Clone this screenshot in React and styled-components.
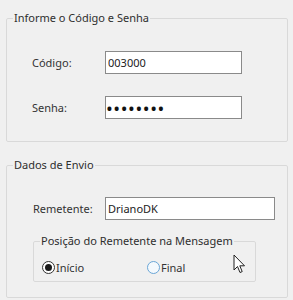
import React from "react";
import styled, { createGlobalStyle } from "styled-components";

const Global = createGlobalStyle`
  html, body {
    margin: 0;
    padding: 0;
    background: #f0f0f0;
  }
  body {
    font-family: "Noto Sans", "Open Sans", sans-serif;
    font-size: 11px;
    color: #2b2b2b;
  }
`;

const Page = styled.div`
  position: relative;
  width: 293px;
  height: 300px;
  padding: 11px 0 0 6px;
  box-sizing: border-box;
  overflow: hidden;
`;

const Group = styled.fieldset`
  margin: 0 0 ${(p) => p.$gap || 0}px 0;
  width: ${(p) => p.$width}px;
  height: ${(p) => p.$height}px;
  box-sizing: border-box;
  border: 1px solid #d9d9d9;
  border-radius: 2px;
  padding: 0;
  min-width: 0;
`;

const Title = styled.legend`
  padding: 0 1px;
  margin-left: ${(p) => p.$indent || 6}px;
  font-size: 11px;
  line-height: 14px;
  height: 14px;
  white-space: nowrap;
  color: #2e2e2e;
`;

const Body = styled.div`
  padding: ${(p) => p.$pad};
`;

const Row = styled.div`
  display: flex;
  align-items: center;
  height: 23px;
  margin-bottom: ${(p) => p.$gap || 0}px;
`;

const Label = styled.label`
  width: ${(p) => p.$width || 73}px;
  flex: none;
  font-size: 11px;
  color: #333;
`;

const Field = styled.input`
  box-sizing: border-box;
  width: ${(p) => p.$width}px;
  height: 23px;
  border: 1px solid #8a8a8a;
  background: #fff;
  padding: 0 2px;
  font-family: "Noto Sans", "Open Sans", sans-serif;
  font-size: 11px;
  color: #222;
  outline: none;
  border-radius: 0;
  &[type="password"] {
    font-size: 18px;
    letter-spacing: 0.6px;
    padding-left: 0;
    color: #111;
  }
`;

const Options = styled.div`
  display: flex;
  align-items: center;
  height: 22px;
  margin-top: 8px;
`;

const Option = styled.label`
  display: flex;
  align-items: center;
  width: ${(p) => p.$width}px;
  font-size: 11px;
  color: #333;
`;

const Dot = styled.span`
  width: 13px;
  height: 13px;
  box-sizing: border-box;
  border-radius: 50%;
  border: 1px solid ${(p) => (p.$on ? "#333" : "#6aa6d6")};
  background: ${(p) => (p.$on ? "#fff" : "#f4f9fd")};
  display: flex;
  align-items: center;
  justify-content: center;
  margin-right: 1px;
  &::after {
    content: "";
    width: 7px;
    height: 7px;
    border-radius: 50%;
    background: #1a1a1a;
    display: ${(p) => (p.$on ? "block" : "none")};
  }
`;

const Cursor = styled.svg`
  position: absolute;
  left: 233px;
  top: 254px;
`;

export default function App() {
  return (
    <Page>
      <Global />
      <Group $width={282} $height={131} $gap={16}>
        <Title>Informe o Código e Senha</Title>
        <Body $pad="26px 0 0 25px">
          <Row $gap={22}>
            <Label>Código:</Label>
            <Field $width={137} defaultValue="003000" readOnly />
          </Row>
          <Row>
            <Label>Senha:</Label>
            <Field $width={137} type="password" defaultValue="12345678" readOnly />
          </Row>
        </Body>
      </Group>
      <Group $width={282} $height={140}>
        <Title>Dados de Envio</Title>
        <Body $pad="25px 0 0 26px">
          <Row $gap={14}>
            <Label $width={72}>Remetente:</Label>
            <Field $width={170} defaultValue="DrianoDK" readOnly />
          </Row>
          <Group $width={223} $height={48}>
            <Title $indent={6}>Posição do Remetente na Mensagem</Title>
            <Body $pad="0 0 0 8px">
              <Options>
                <Option $width={105}>
                  <Dot $on />
                  Início
                </Option>
                <Option $width={60}>
                  <Dot />
                  Final
                </Option>
              </Options>
            </Body>
          </Group>
        </Body>
      </Group>
      <Cursor width="13" height="20" viewBox="0 0 13 20">
        <path
          d="M1 1 L1 16 L4.5 12.5 L7 18.5 L9.2 17.6 L6.8 11.8 L11.5 11.8 Z"
          fill="#fff"
          stroke="#222"
          strokeWidth="1"
          strokeLinejoin="round"
        />
      </Cursor>
    </Page>
  );
}
